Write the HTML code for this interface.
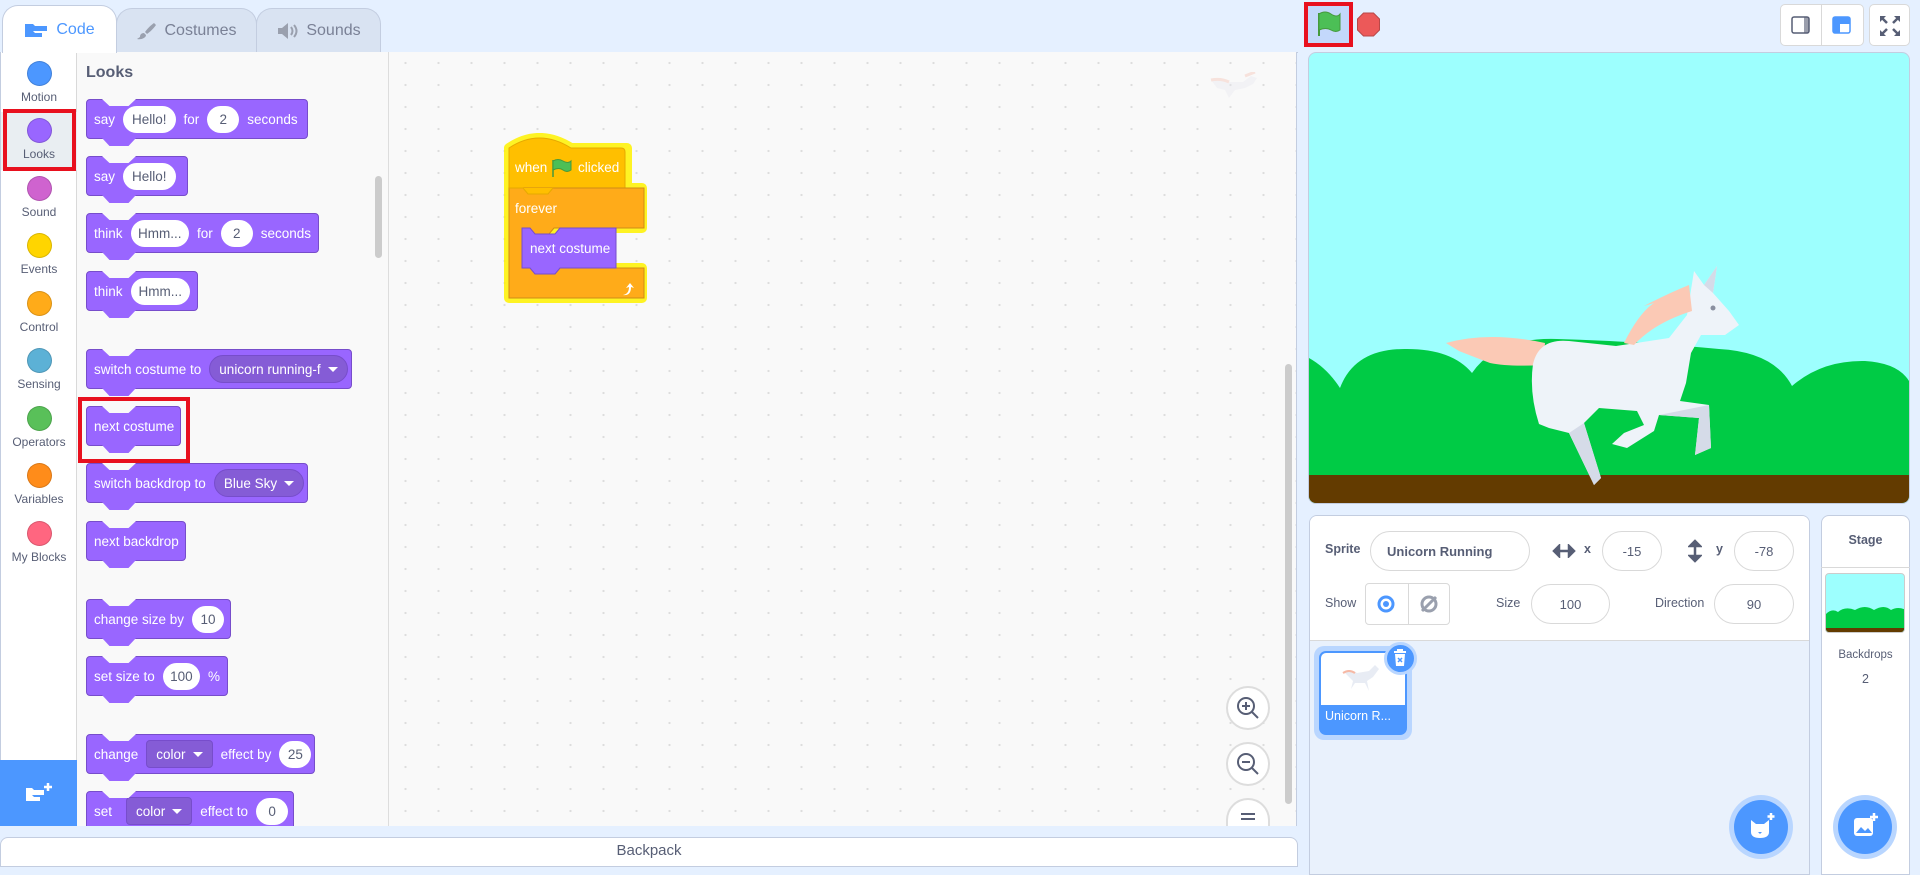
<!DOCTYPE html>
<html><head><meta charset="utf-8">
<style>
*{box-sizing:border-box;margin:0;padding:0}
body{width:1920px;height:863px;overflow:hidden;background:#e5f0ff;font-family:"Liberation Sans",sans-serif;position:relative;color:#575e75}
.abs{position:absolute}
.tab{position:absolute;top:8px;height:45px;border:1px solid #c3cde0;border-bottom:none;border-radius:16px 16px 0 0;background:#d9e3f2;font-size:16px;color:#7a8196;display:flex;align-items:center;justify-content:center;gap:8px}
.cats{position:absolute;left:0;top:52px;width:77px;height:774px;background:#fff;border-right:1px solid #d9d9d9;border-left:1px solid #c3cde0}
.cat{position:absolute;left:0;width:76px;text-align:center;font-size:12px;color:#575e75}
.cat i{display:block;width:25px;height:25px;border-radius:50%;margin:0 auto 4px;border:1px solid rgba(0,0,0,.15)}
.pal{position:absolute;left:77px;top:52px;width:312px;height:774px;background:#f9f9f9;border-right:1px solid #ddd;overflow:hidden}
.blk{position:absolute;left:9px;height:40px;background:#9966ff;border:1px solid #774dcb;border-radius:4px;color:#fff;font-size:13.5px;display:flex;align-items:center;padding:0 7px;gap:8px;white-space:nowrap}
.blk::before{content:"";position:absolute;top:-1px;left:15px;width:34px;height:7px;background:#f9f9f9;clip-path:polygon(0 0,100% 0,78% 100%,22% 100%)}
.blk::after{content:"";position:absolute;top:100%;left:15px;width:34px;height:8px;background:#9966ff;clip-path:polygon(0 0,100% 0,78% 100%,22% 100%)}
.in{background:#fff;color:#575e75;border-radius:14px;height:27px;padding:0 9px;display:flex;align-items:center;min-width:32px;justify-content:center}
.dd{background:#855cd6;border:1px solid #774dcb;border-radius:14px;height:28px;padding:0 9px;display:flex;align-items:center;gap:7px;color:#fff}
.ddsq{border-radius:4px}
.car{width:0;height:0;border-left:5px solid transparent;border-right:5px solid transparent;border-top:5px solid #fff}
.code{position:absolute;left:389px;top:52px;width:908px;height:774px;background-color:#f9f9f9;background-image:radial-gradient(circle,#ddd 1px,transparent 1.3px);background-size:33px 22px;border-right:1px solid #c3cde0}
.zb{position:absolute;left:1226px;width:44px;height:44px;border-radius:50%;background:#fff;border:2px solid #ddd}
.inp{position:absolute;background:#fff;border:1px solid #d9d9d9;border-radius:20px;font-size:13px;color:#575e75;display:flex;align-items:center;justify-content:center}
.lbl{position:absolute;font-size:12.5px;color:#575e75}
</style></head><body>

<!-- tabs -->
<div class="tab" style="left:2px;width:115px;top:5px;height:48px;background:#fff;color:#4c97ff;z-index:2">
<svg width="24" height="16" viewBox="0 0 24 16"><path d="M1 2h8l2 2h12v5H1z" fill="#4c97ff"/><path d="M1 9h8l2 2h7v4H1z" fill="#4c97ff"/></svg>Code</div>
<div class="tab" style="left:116px;width:141px"><svg width="20" height="20" viewBox="0 0 20 20"><path d="M18 2c-3 2-7 6-9 9l2 2c3-2 7-6 9-9z" fill="#9aa0ae"/><path d="M8 12c-3 0-4 2-4 4l-3 2c4 1 9-1 9-4z" fill="#9aa0ae"/></svg>Costumes</div>
<div class="tab" style="left:256px;width:125px"><svg width="22" height="18" viewBox="0 0 22 18"><path d="M2 6h4l6-5v16l-6-5H2z" fill="#9aa0ae"/><path d="M15 5q3 4 0 8M18 3q5 6 0 12" stroke="#9aa0ae" stroke-width="2" fill="none"/></svg>Sounds</div>
<div class="abs" style="left:0;top:52px;width:1298px;height:1px;background:#c3cde0"></div>

<!-- categories -->
<div class="cats">
<div class="abs" style="left:0;top:60px;width:76px;height:58px;background:#e9eef2"></div>
<div class="cat" style="top:9px"><i style="background:#4c97ff"></i>Motion</div>
<div class="cat" style="top:66px"><i style="background:#9966ff"></i>Looks</div>
<div class="cat" style="top:124px"><i style="background:#cf63cf"></i>Sound</div>
<div class="cat" style="top:181px"><i style="background:#ffd500"></i>Events</div>
<div class="cat" style="top:239px"><i style="background:#ffab19"></i>Control</div>
<div class="cat" style="top:296px"><i style="background:#5cb1d6"></i>Sensing</div>
<div class="cat" style="top:354px"><i style="background:#59c059"></i>Operators</div>
<div class="cat" style="top:411px"><i style="background:#ff8c1a"></i>Variables</div>
<div class="cat" style="top:469px"><i style="background:#ff6680"></i>My Blocks</div>
<div class="abs" style="left:-1px;top:708px;width:78px;height:66px;background:#4c97ff;display:flex;align-items:center;justify-content:center">
<svg width="30" height="24" viewBox="0 0 30 24"><path d="M2 7h6l2 2h10v5H2z" fill="#fff"/><path d="M2 14h6l2 2h6v4H2z" fill="#fff"/><path d="M24 2v8M20 6h8" stroke="#fff" stroke-width="2.5"/></svg></div>
</div>
<div class="abs" style="left:3px;top:109px;width:73px;height:62px;border:4px solid #e8101e"></div>

<!-- palette -->
<div class="pal">
<div class="abs" style="left:9px;top:12px;font-size:16px;font-weight:bold;color:#575e75">Looks</div>
<div class="abs" style="left:298px;top:124px;width:7px;height:82px;border-radius:4px;background:#ccc"></div>
<div class="blk" style="top:47px;width:222px">say <span class="in">Hello!</span> for <span class="in">2</span> seconds</div>
<div class="blk" style="top:104px;width:102px">say <span class="in">Hello!</span></div>
<div class="blk" style="top:161px;width:233px">think <span class="in">Hmm...</span> for <span class="in">2</span> seconds</div>
<div class="blk" style="top:219px;width:112px">think <span class="in">Hmm...</span></div>
<div class="blk" style="top:297px;width:266px">switch costume to <span class="dd">unicorn running-f <span class="car"></span></span></div>
<div class="blk" style="top:354px;width:95px">next costume</div>
<div class="blk" style="top:411px;width:222px">switch backdrop to <span class="dd">Blue Sky <span class="car"></span></span></div>
<div class="blk" style="top:469px;width:100px">next backdrop</div>
<div class="blk" style="top:547px;width:145px">change size by <span class="in">10</span></div>
<div class="blk" style="top:604px;width:142px">set size to <span class="in">100</span> %</div>
<div class="blk" style="top:682px;width:229px">change <span class="dd ddsq">color <span class="car"></span></span> effect by <span class="in">25</span></div>
<div class="blk" style="top:739px;width:208px">set <span class="dd ddsq" style="margin-left:6px">color <span class="car"></span></span> effect to <span class="in">0</span></div>
</div>
<div class="abs" style="left:78px;top:397px;width:112px;height:66px;border:4px solid #e8101e"></div>

<!-- code area -->
<div class="code">
<div class="abs" style="left:896px;top:312px;width:7px;height:440px;border-radius:4px;background:#ccc"></div>
<svg class="abs" style="left:820px;top:20px" width="60" height="30" viewBox="0 0 60 30" opacity=".35"><path d="M2 8q10-2 18 2l14 0 8-6 6 2-4 6-8 4-10 2-6 8-4-8-8-2z" fill="#e6e6f0"/><path d="M2 8q10-2 18 2" stroke="#f4b8a8" stroke-width="3" fill="none"/><path d="M36 4l10-4" stroke="#f4b8a8" stroke-width="3"/></svg>
</div>
<div class="zb" style="top:686px"><svg width="40" height="40" viewBox="0 0 40 40"><circle cx="18" cy="18" r="8" fill="none" stroke="#575e75" stroke-width="2"/><path d="M24 24l6 6M14 18h8M18 14v8" stroke="#575e75" stroke-width="2"/></svg></div>
<div class="zb" style="top:742px"><svg width="40" height="40" viewBox="0 0 40 40"><circle cx="18" cy="18" r="8" fill="none" stroke="#575e75" stroke-width="2"/><path d="M24 24l6 6M14 18h8" stroke="#575e75" stroke-width="2"/></svg></div>
<div class="zb" style="top:798px;height:28px;border-radius:22px 22px 0 0;border-bottom:none"><div class="abs" style="left:13px;top:13px;width:14px;height:2px;background:#575e75;box-shadow:0 5px 0 #575e75"></div></div>
<div class="abs" style="left:0;top:826px;width:1298px;height:11px;background:#e5f0ff"></div>

<!-- script -->
<svg class="abs" style="left:495px;top:125px" width="165" height="185" viewBox="0 0 165 185">
<g stroke="#fff200" stroke-width="10" stroke-linejoin="round" fill="#fff200" opacity=".85">
<path d="M14 23q30-20 62 0h56v40h15v40h-34v40h34v30H14z"/>
</g>
<path d="M14 23q30-20 62 0h50q4 0 4 4v36H14z" fill="#ffbf00" stroke="#e6a900"/>
<path d="M14 63h135v40h-90l-5 6h-20l-5-6h-2v40h122v30H14z" fill="#ffab19" stroke="#cf8b17"/>
<path d="M27 103h8l5 6h20l5-6h56v40H65l-5 6H40l-5-6h-8z" fill="#9966ff" stroke="#774dcb"/>
<path d="M14 63h14l5 6h20l5-6" fill="#ffbf00" stroke="#e6a900"/>
<text x="20" y="47" fill="#fff" font-size="13.5" font-family="Liberation Sans">when</text>
<path d="M58 35v17" stroke="#45993d" stroke-width="1.5"/><path d="M58 36q5-3 10 0t8 0v9q-4 3-8 0t-10 0z" fill="#4cbf56" stroke="#45993d"/>
<text x="83" y="47" fill="#fff" font-size="13.5" font-family="Liberation Sans">clicked</text>
<text x="20" y="88" fill="#fff" font-size="13.5" font-family="Liberation Sans">forever</text>
<text x="35" y="128" fill="#fff" font-size="13.5" font-family="Liberation Sans">next costume</text>
<path d="M128 170q6-1 6-8l-3 1 4-5 4 5-3-1q0 9-8 8z" fill="#fff"/>
</svg>

<!-- backpack -->
<div class="abs" style="left:0;top:837px;width:1298px;height:30px;background:#fff;border:1px solid #c3cde0;border-radius:8px 8px 0 0;text-align:center;font-size:15px;line-height:26px;color:#575e75">Backpack</div>

<!-- stage header -->
<div class="abs" style="left:1304px;top:2px;width:49px;height:45px;border:4px solid #e8101e;background:#c3d8fb"></div>
<svg class="abs" style="left:1313px;top:9px" width="30" height="30" viewBox="0 0 30 30"><path d="M6 4v23" stroke="#45993d" stroke-width="2"/><path d="M6 5q6-4 12 0t9 0v16q-4 3-9 0t-12 0z" fill="#4cbf56" stroke="#45993d"/></svg>
<svg class="abs" style="left:1356px;top:12px" width="25" height="25" viewBox="0 0 25 25"><path d="M7.5 1h10l6 6v11l-6 6h-10l-6-6V7z" fill="#ec5959" stroke="#b84848"/></svg>
<div class="abs" style="left:1780px;top:4px;width:84px;height:42px;background:#fff;border:1px solid #d9d9d9;border-radius:5px"></div>
<div class="abs" style="left:1821px;top:4px;width:1px;height:42px;background:#d9d9d9"></div>
<svg class="abs" style="left:1790px;top:14px" width="22" height="22" viewBox="0 0 22 22"><rect x="2" y="3" width="17" height="16" rx="2" fill="none" stroke="#575e75" stroke-width="1.5"/><rect x="14" y="3" width="5" height="16" fill="#575e75" opacity=".6"/></svg>
<svg class="abs" style="left:1831px;top:14px" width="22" height="22" viewBox="0 0 22 22"><rect x="2" y="3" width="17" height="16" rx="2" fill="#fff" stroke="#4c97ff" stroke-width="1.5"/><rect x="2" y="3" width="7" height="16" fill="#4c97ff"/><rect x="9" y="3" width="10" height="7" fill="#4c97ff"/></svg>
<div class="abs" style="left:1869px;top:4px;width:41px;height:42px;background:#fff;border:1px solid #d9d9d9;border-radius:5px"></div>
<svg class="abs" style="left:1878px;top:14px" width="24" height="24" viewBox="0 0 24 24"><g stroke="#575e75" stroke-width="2.5" fill="none"><path d="M3 3l6 6M3 21l6-6M21 3l-6 6M21 21l-6-6"/></g><g fill="#575e75"><path d="M2 2h6L2 8z"/><path d="M22 2h-6l6 6z"/><path d="M2 22h6l-6-6z"/><path d="M22 22h-6l6-6z"/></g></svg>

<!-- stage -->
<div class="abs" style="left:1308px;top:52px;width:602px;height:452px;border:1px solid #c3cde0;border-radius:8px;overflow:hidden;background:#9dfffe">
<svg width="602" height="452" viewBox="0 0 602 452">
<path d="M0 305q18 10 31 30q15-40 67-39q45 0 65 24q25-36 85-34q75 2 162 10q55 3 73 37q30-26 73-25q33 2 44 20V452H0z" fill="#00cb45"/>
<rect x="0" y="422" width="602" height="30" fill="#633b00"/>
<path d="M137 290Q180 278 236 290L234 312Q200 314 181 310Q160 302 150 298z" fill="#fbc9b5"/>
<path d="M224 311Q230 285 260 288L307 293L360 285L378 262L385 218L395 232L408 213L404 240L420 258L430 272L416 282L392 282L382 300L377 330L371 348L400 352L402 395L386 402L390 365L350 362L345 378L318 395L303 391L315 380L335 372L328 358L290 355L275 370L292 425L285 432L260 380L240 375L230 371Q220 340 224 311z" fill="#eef3f9"/>
<path d="M275 370L292 425L285 432L260 380z M350 362L390 365L386 402L402 395L400 352z" fill="#d5dbe8"/>
<path d="M315 290Q330 260 345 250L335 253Q360 240 380 232L383 258Q345 270 325 292z" fill="#fbc9b5"/>
<path d="M395 232L408 213L404 240z" fill="#d5dbe8"/>
<circle cx="404" cy="255" r="2.5" fill="#8a8fa0"/>
</svg>
</div>

<!-- sprite info panel -->
<div class="abs" style="left:1309px;top:515px;width:501px;height:360px;background:#e9f1fc;border:1px solid #c3cde0;border-radius:8px 8px 0 0;overflow:hidden">
<div class="abs" style="left:0;top:0;width:501px;height:125px;background:#fff;border-bottom:1px solid #d9d9d9"></div>
</div>
<div class="lbl" style="left:1325px;top:542px;font-weight:bold">Sprite</div>
<div class="inp" style="left:1370px;top:531px;width:160px;height:40px;justify-content:flex-start;padding-left:16px;font-weight:bold">Unicorn Running</div>
<svg class="abs" style="left:1552px;top:544px" width="24" height="14" viewBox="0 0 24 14"><path d="M2 7h20M2 7l5-5v10zM22 7l-5-5v10z" stroke="#575e75" stroke-width="2.5" fill="#575e75"/></svg>
<div class="lbl" style="left:1584px;top:542px;font-weight:bold">x</div>
<div class="inp" style="left:1602px;top:531px;width:60px;height:40px">-15</div>
<svg class="abs" style="left:1688px;top:539px" width="14" height="24" viewBox="0 0 14 24"><path d="M7 2v20M7 2l-5 5h10zM7 22l-5-5h10z" stroke="#575e75" stroke-width="2.5" fill="#575e75"/></svg>
<div class="lbl" style="left:1716px;top:542px;font-weight:bold">y</div>
<div class="inp" style="left:1734px;top:531px;width:60px;height:40px">-78</div>
<div class="lbl" style="left:1325px;top:596px">Show</div>
<div class="abs" style="left:1365px;top:583px;width:85px;height:42px;background:#fff;border:1px solid #d9d9d9;border-radius:4px"></div>
<div class="abs" style="left:1408px;top:583px;width:1px;height:42px;background:#d9d9d9"></div>
<svg class="abs" style="left:1376px;top:594px" width="20" height="20" viewBox="0 0 20 20"><circle cx="10" cy="10" r="7" fill="none" stroke="#4c97ff" stroke-width="3"/><circle cx="10" cy="10" r="3" fill="#4c97ff"/></svg>
<svg class="abs" style="left:1419px;top:594px" width="20" height="20" viewBox="0 0 20 20"><circle cx="10" cy="10" r="7" fill="none" stroke="#9aa0ae" stroke-width="3"/><path d="M3 17L17 3" stroke="#9aa0ae" stroke-width="3"/></svg>
<div class="lbl" style="left:1496px;top:596px">Size</div>
<div class="inp" style="left:1531px;top:584px;width:79px;height:40px">100</div>
<div class="lbl" style="left:1655px;top:596px">Direction</div>
<div class="inp" style="left:1714px;top:584px;width:80px;height:40px">90</div>

<!-- sprite thumb -->
<div class="abs" style="left:1314px;top:646px;width:98px;height:94px;border-radius:10px;background:#b9d6ff"></div>
<div class="abs" style="left:1319px;top:651px;width:88px;height:84px;border-radius:7px;background:#4c97ff;overflow:hidden">
<div class="abs" style="left:2px;top:2px;width:84px;height:52px;background:#fff;border-radius:5px 5px 0 0"></div>
<svg class="abs" style="left:22px;top:12px" width="44" height="30" viewBox="0 0 44 30"><path d="M4 10q6-4 12 0l12-2 6-6 4 4-6 8-6 4 2 10-4-8-10 0-4 6 2-8z" fill="#e8ecf4"/><path d="M2 10q6-4 12 0" stroke="#f6b8a4" stroke-width="2" fill="none"/></svg>
<div class="abs" style="left:6px;top:58px;color:#fff;font-size:12.5px">Unicorn R...</div>
</div>
<div class="abs" style="left:1384px;top:642px;width:33px;height:33px;border-radius:50%;background:#4c97ff;border:3px solid #b9d6ff"></div>
<svg class="abs" style="left:1391px;top:648px" width="18" height="20" viewBox="0 0 18 20"><path d="M3 4h12M7 4V2h4v2" stroke="#fff" stroke-width="2" fill="none"/><path d="M4 6h10l-1 12H5z" fill="#fff"/><path d="M7 10l4 4M11 10l-4 4" stroke="#4c97ff" stroke-width="1.5"/></svg>

<!-- add sprite -->
<div class="abs" style="left:1729px;top:795px;width:64px;height:64px;border-radius:50%;background:#b9d6ff"></div>
<div class="abs" style="left:1734px;top:800px;width:54px;height:54px;border-radius:50%;background:#4c97ff"></div>
<svg class="abs" style="left:1748px;top:812px" width="28" height="28" viewBox="0 0 28 28"><path d="M3 8l5 4h8l5-4v12q0 6-9 6t-9-6z" fill="#fff"/><path d="M10 20h4l-2 2z" fill="#4c97ff"/><path d="M23 1v7M19.5 4.5h7" stroke="#fff" stroke-width="2.5"/></svg>

<!-- stage panel -->
<div class="abs" style="left:1821px;top:515px;width:89px;height:360px;background:#fff;border:1px solid #c3cde0;border-radius:8px 8px 0 0"></div>
<div class="abs" style="left:1821px;top:567px;width:89px;height:1px;background:#d9d9d9"></div>
<div class="lbl" style="left:1821px;top:533px;width:89px;text-align:center;font-weight:bold">Stage</div>
<div class="abs" style="left:1825px;top:573px;width:80px;height:60px;border-radius:4px;overflow:hidden;background:#9dfffe;border:1px solid #ccc">
<svg width="80" height="60" viewBox="0 0 80 60"><path d="M0 40q6-6 12-2q7-6 17-2q10-6 19 0q10-6 17 0q7-4 15 0V60H0z" fill="#00cb45"/><rect x="0" y="54" width="80" height="6" fill="#633b00"/></svg></div>
<div class="lbl" style="left:1821px;top:649px;width:89px;text-align:center;font-size:11.5px">Backdrops</div>
<div class="lbl" style="left:1821px;top:672px;width:89px;text-align:center">2</div>
<div class="abs" style="left:1833px;top:795px;width:64px;height:64px;border-radius:50%;background:#b9d6ff"></div>
<div class="abs" style="left:1838px;top:800px;width:54px;height:54px;border-radius:50%;background:#4c97ff"></div>
<svg class="abs" style="left:1851px;top:812px" width="28" height="28" viewBox="0 0 28 28"><rect x="3" y="6" width="19" height="18" rx="3" fill="#fff"/><path d="M5 21l5-6 4 4 3-3 4 5z" fill="#4c97ff"/><path d="M23 1v8M19 5h8" stroke="#fff" stroke-width="2.5"/></svg>
</body></html>
